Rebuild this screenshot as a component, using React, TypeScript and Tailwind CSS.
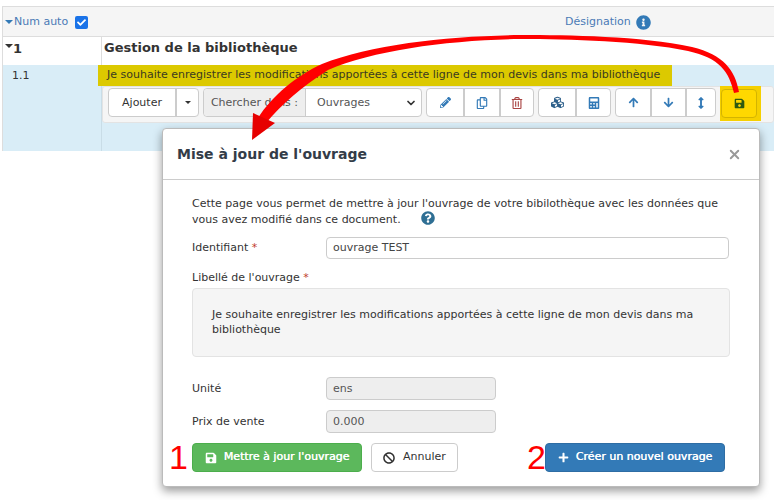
import {
  FaArrowDown,
  FaArrowUp,
  FaArrowsAltV,
  FaBan,
  FaCalculator,
  FaCheck,
  FaCubes,
  FaInfoCircle,
  FaPencilAlt,
  FaPlus,
  FaQuestionCircle,
  FaRegCopy,
  FaRegTrashAlt,
  FaSave,
} from 'react-icons/fa'
import { ChevronDown, X } from 'lucide-react'

function ToolGroup({ widths, children }: { widths: string[]; children: React.ReactNode[] }) {
  return (
    <div className="flex h-[29px] rounded-[4px] border border-[#ccc] bg-white">
      {children.map((icon, i) => (
        <div key={i} className={`flex items-center justify-center ${widths[i]} ${i > 0 ? 'border-l-2 border-[#ccc]' : ''}`}>
          {icon}
        </div>
      ))}
    </div>
  )
}

function Modal() {
  return (
    <div className="absolute left-[162px] top-[128px] h-[359px] w-[598px] rounded-[4px] border border-[#bbb] bg-white shadow-[0_4px_10px_rgba(0,0,0,0.4)]">
      <div className="flex h-[51px] items-center justify-between border-b border-[#ccc] pl-[14px] pr-[17px]">
        <h2 className="text-[14px] font-bold text-[#333c48]">Mise à jour de l'ouvrage</h2>
        <X className="h-[15px] w-[15px] text-[#999]" strokeWidth={3} />
      </div>

      <div className="flex flex-col pl-[29px] pr-[29px] pt-[16px] text-[11px] text-[#333]">
        <p className="leading-[15px]">
          Cette page vous permet de mettre à jour l'ouvrage de votre bibilothèque avec les données que
          <br />
          vous avez modifié dans ce document.
          <FaQuestionCircle className="ml-[20px] inline h-[14px] w-[14px] align-[-2px] text-[#2f6f94]" />
        </p>

        <div className="mt-[10px] flex h-[22px] items-center">
          <span className="w-[134px]">
            Identifiant <span className="text-[#c0392b]">*</span>
          </span>
          <div className="flex h-[22px] w-[403px] items-center rounded-[4px] border border-[#ccc] px-[6px] text-[#444]">
            ouvrage TEST
          </div>
        </div>

        <div className="mt-[11px] leading-[15px]">
          Libellé de l'ouvrage <span className="text-[#c0392b]">*</span>
        </div>
        <div className="mt-[3px] h-[69px] w-[538px] rounded-[4px] border border-[#e3e3e3] bg-[#f5f5f5] px-[19px] pt-[18px] leading-[15px]">
          Je souhaite enregistrer les modifications apportées à cette ligne de mon devis dans ma bibliothèque
        </div>

        <div className="mt-[20px] flex h-[23px] items-center">
          <span className="w-[134px] pt-[1px]">Unité</span>
          <div className="flex h-[23px] w-[170px] items-center rounded-[4px] border border-[#ccc] bg-[#eee] px-[6px] pt-[1px] text-[#555]">ens</div>
        </div>
        <div className="mt-[10px] flex h-[23px] items-center">
          <span className="w-[134px] pt-[1px]">Prix de vente</span>
          <div className="flex h-[23px] w-[170px] items-center rounded-[4px] border border-[#ccc] bg-[#eee] px-[6px] pt-[1px] text-[#555]">0.000</div>
        </div>

        <div className="mt-[10px] flex h-[29px] items-stretch">
          <div className="relative flex w-[170px] items-center justify-center gap-[7px] rounded-[4px] border border-[#4cae4c] bg-[#5cb85c] font-bold text-white">
            <span className="absolute left-[-24px] top-[-4px] font-['Liberation_Sans',sans-serif] text-[34px] font-normal leading-[34px] text-[#f00]">1</span>
            <FaSave className="h-[12px] w-[12px]" />
            <span className="font-normal [text-shadow:0.3px_0_0_white]">Mettre à jour l'ouvrage</span>
          </div>
          <div className="ml-[9px] flex w-[87px] items-center justify-center gap-[8px] rounded-[4px] border border-[#ccc] bg-white text-[#333]">
            <FaBan className="h-[12px] w-[12px]" />
            <span>Annuler</span>
          </div>
          <div className="relative ml-[87px] flex w-[180px] items-center justify-center gap-[7px] rounded-[4px] border border-[#2e6da4] bg-[#337ab7] text-white">
            <span className="absolute left-[-19px] top-[-4px] font-['Liberation_Sans',sans-serif] text-[34px] font-normal leading-[34px] text-[#f00]">2</span>
            <FaPlus className="h-[11px] w-[11px]" />
            <span className="[text-shadow:0.3px_0_0_white]">Créer un nouvel ouvrage</span>
          </div>
        </div>
      </div>
    </div>
  )
}

export default function App() {
  return (
    <div className="relative h-[500px] w-[774px] overflow-hidden bg-white font-['DejaVu_Sans',sans-serif] text-[11px]">
      <div className="ml-[2px] mt-[6px] border-l border-[#ddd]">
        {/* entête du tableau */}
        <div className="flex h-[31px] items-center border-y border-[#ddd] bg-[#f5f5f5] pt-[1px] text-[#4a7ab5]">
          <div className="flex w-[98px] items-center pl-[2px]">
            <span className="h-0 w-0 border-x-[4px] border-t-[4px] border-x-transparent border-t-[#337ab7]" />
            <span className="ml-[1px]">Num auto</span>
            <span className="ml-[7px] flex h-[13px] w-[13px] items-center justify-center rounded-[2px] bg-[#1a73e8]">
              <FaCheck className="h-[9px] w-[9px] text-white" />
            </span>
          </div>
          <div className="flex flex-1 items-center pl-[464px]">
            <span>Désignation</span>
            <FaInfoCircle className="ml-[5px] h-[15px] w-[15px] text-[#337ab7]" />
          </div>
        </div>

        {/* chapitre */}
        <div className="flex h-[28px] text-[#333]">
          <div className="flex w-[98px] pl-[2px] pt-[4px] text-[13px] font-bold">
            <span className="mt-[3px] h-0 w-0 border-x-[4px] border-t-[4px] border-x-transparent border-t-[#333]" />
            <span className="leading-[16px]">1</span>
          </div>
          <div className="flex-1 border-l border-[#ddd] pl-[2px] pt-[3px] text-[13px] font-bold leading-[16px]">Gestion de la bibliothèque</div>
        </div>

        {/* ligne 1.1 */}
        <div className="flex h-[86px] bg-[#d9edf7]">
          <div className="w-[98px] pl-[9px] pt-[3px] leading-[15px] text-[#333]">1.1</div>
          <div className="flex-1 border-l border-[#c9dde7]">
            <div className="ml-[-4px] flex h-[21px] w-[574px] items-center bg-[#dcc900] pl-[9px] text-[#3a3a20]">
              Je souhaite enregistrer les modifications apportées à cette ligne de mon devis dans ma bibliothèque
            </div>
            <div className="flex h-[37px] items-start gap-[4px] rounded-[3px] border border-[#e3e3e3] bg-[#f5f5f5] pl-[5px] pt-[1px]">
              <div className="flex h-[29px] rounded-[4px] border border-[#ccc] bg-white text-[#333]">
                <div className="flex w-[66px] items-center justify-center pt-[2px]">Ajouter</div>
                <div className="flex w-[23px] items-center justify-center border-l-2 border-[#ccc]">
                  <span className="h-0 w-0 border-x-[3px] border-t-[3px] border-x-transparent border-t-[#333]" />
                </div>
              </div>
              <div className="flex h-[29px] w-[219px] rounded-[4px] border border-[#ccc] bg-white text-[#555]">
                <div className="flex w-[102px] items-center justify-center rounded-l-[4px] border-r border-[#ccc] bg-[#eee] pt-[2px]">Chercher dans :</div>
                <div className="flex flex-1 items-center justify-between pl-[11px] pr-[4px]">
                  <span className="pt-[2px]">Ouvrages</span>
                  <ChevronDown className="h-[12px] w-[12px] text-[#333]" strokeWidth={3.5} />
                </div>
              </div>
              <ToolGroup widths={['w-[36px]', 'w-[36px]', 'w-[34px]']}>
                {[
                  <FaPencilAlt key="a" className="h-[11px] w-[11px] text-[#337ab7]" />,
                  <FaRegCopy key="b" className="h-[12px] w-[12px] text-[#337ab7]" />,
                  <FaRegTrashAlt key="c" className="h-[12px] w-[12px] text-[#a94442]" />,
                ]}
              </ToolGroup>
              <ToolGroup widths={['w-[36px]', 'w-[35px]']}>
                {[
                  <FaCubes key="a" className="h-[13px] w-[13px] text-[#2d5f8a]" />,
                  <FaCalculator key="b" className="h-[12px] w-[12px] text-[#337ab7]" />,
                ]}
              </ToolGroup>
              <ToolGroup widths={['w-[34px]', 'w-[35px]', 'w-[30px]']}>
                {[
                  <FaArrowUp key="a" className="h-[11px] w-[11px] text-[#337ab7]" />,
                  <FaArrowDown key="b" className="h-[11px] w-[11px] text-[#337ab7]" />,
                  <FaArrowsAltV key="c" className="h-[12px] w-[12px] text-[#337ab7]" />,
                ]}
              </ToolGroup>
              <div className="mt-[-2px] flex h-[35px] w-[41px] items-center bg-[#f5d000] pl-[1px]">
                <div className="flex h-[29px] w-[36px] items-center justify-center rounded-[4px] border border-[#d4b400] bg-[#ffd800]">
                  <FaSave className="h-[11px] w-[11px] text-[#2f5a10]" />
                </div>
              </div>
            </div>
          </div>
        </div>
      </div>

      <Modal />

      {/* flèche rouge d'annotation */}
      <svg className="absolute left-0 top-0" width="774" height="500" viewBox="0 0 774 500" fill="none">
        <path
          d="M739 92 C735 70 724 55 692 47 C640 36 570 35 520 35 C450 36 372 44 322 64 C296 76 272 96 258 118 L266 123 C282 104 300 88 328 70 C374 50 450 40 520 39 C570 39 640 41 688 51 C720 58 729 72 734 93 Z"
          fill="#f00"
        />
        <polygon points="252,140 253,113 275,123" fill="#e60000" />
      </svg>
    </div>
  )
}
